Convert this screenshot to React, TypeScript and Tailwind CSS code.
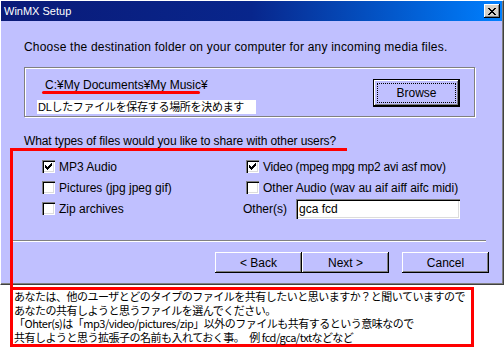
import React from "react";

const CHECK_COLS: [number, number][] = [
  [3, 5],
  [4, 6],
  [5, 7],
  [6, 6],
  [7, 5],
  [8, 4],
  [9, 3],
];

function CheckBox({ checked }: { checked?: boolean }) {
  return (
    <span className="relative inline-block w-[13px] h-[13px] shrink-0 bg-white shadow-[inset_1px_1px_0_#808080,inset_2px_2px_0_#000,inset_-1px_-1px_0_#fff,inset_-2px_-2px_0_#dcdcdc]">
      {checked && (
        <svg className="absolute inset-0" width="13" height="13" viewBox="0 0 13 13" shapeRendering="crispEdges">
          {CHECK_COLS.map(([x, y]) => (
            <rect key={x} x={x} y={y} width="1" height="3" fill="#000" />
          ))}
        </svg>
      )}
    </span>
  );
}

function Option({ checked, label, className = "" }: { checked?: boolean; label: string; className?: string }) {
  return (
    <div className="flex items-center h-[13px] gap-[4px] whitespace-nowrap">
      <CheckBox checked={checked} />
      <span className={className}>{label}</span>
    </div>
  );
}

function Btn({ children, className = "" }: { children: React.ReactNode; className?: string }) {
  return (
    <div
      className={
        "h-[21px] w-[87px] flex items-center justify-center bg-[#c0c0ff] shadow-[inset_-1px_-1px_0_#000,inset_1px_1px_0_#fff,inset_-2px_-2px_0_#808080] " +
        className
      }
    >
      {children}
    </div>
  );
}

export default function App() {
  return (
    <div className="relative w-[504px] h-[348px] overflow-hidden bg-white text-black text-[12px] leading-[14px] font-['Liberation_Sans','Noto_Sans_CJK_JP',sans-serif]">
      {/* Window */}
      <div className="h-[285px] border border-t-white border-l-white border-r-[#404040] border-b-[#404040]">
        <div className="h-full flex flex-col bg-[#c0c0ff] border-r border-b border-r-[#808080] border-b-[#808080]">
          {/* Title bar */}
          <div className="h-[20px] shrink-0 flex items-center justify-between pl-[3px] pr-[2px] bg-linear-to-r from-[#0a1a78] via-[#08268c] to-[#0080ff] text-white text-[11px]">
            <span>WinMX Setup</span>
            <div className="w-[16px] h-[14px] flex items-center justify-center bg-[#d4d0c8] shadow-[inset_-1px_-1px_0_#000,inset_1px_1px_0_#fff,inset_-2px_-2px_0_#808080]">
              <svg width="8" height="7" viewBox="0 0 8 7" shapeRendering="crispEdges">
                <path d="M0 0h2v1h-2zM6 0h2v1h-2zM1 1h2v1h-2zM5 1h2v1h-2zM2 2h4v1h-4zM3 3h2v1h-2zM2 4h4v1h-4zM1 5h2v1h-2zM5 5h2v1h-2zM0 6h2v1h-2zM6 6h2v1h-2z" fill="#000" />
              </svg>
            </div>
          </div>

          {/* Body */}
          <div className="ml-[23px] mt-[19px] h-[14px] whitespace-nowrap tracking-[0.2px]">
            Choose the destination folder on your computer for any incoming media files.
          </div>

          {/* Folder group */}
          <div className="ml-[23px] mt-[13px] w-[451px] h-[50px] shrink-0 flex justify-between border border-[#808080] shadow-[inset_1px_1px_0_#fff,1px_1px_0_#fff]">
            <div className="pl-[12px] pt-[10px] flex flex-col">
              <div className="pl-[8px] h-[14px] whitespace-nowrap">C:¥My Documents¥My Music¥</div>
              <div className="mt-[8px] w-[219px] h-[14px] bg-white pl-[1px] whitespace-nowrap text-[11px] tracking-[-0.3px]">
                DLしたファイルを保存する場所を決めます
              </div>
            </div>
            <div className="mt-[11px] mr-[14px] w-[87px] h-[28px] border border-black">
              <div className="w-full h-full p-[3px] bg-[#c0c0ff] shadow-[inset_-1px_-1px_0_#000,inset_1px_1px_0_#fff,inset_-2px_-2px_0_#808080]">
                <div className="w-full h-full flex items-center justify-center border border-dotted border-black">
                  Browse
                </div>
              </div>
            </div>
          </div>

          <div className="ml-[23px] mt-[17px] h-[14px] whitespace-nowrap tracking-[-0.1px]">
            What types of files would you like to share with other users?
          </div>

          {/* Options */}
          <div className="ml-[41px] mt-[12px] flex flex-col">
            <div className="h-[21px] flex items-start">
              <div className="w-[204px]">
                <Option checked label="MP3 Audio" />
              </div>
              <Option checked label="Video (mpeg mpg mp2 avi asf mov)" className="tracking-[-0.2px]" />
            </div>
            <div className="h-[21px] flex items-start">
              <div className="w-[204px]">
                <Option label="Pictures (jpg jpeg gif)" />
              </div>
              <Option label="Other Audio (wav au aif aiff aifc midi)" />
            </div>
            <div className="h-[21px] flex items-start">
              <div className="w-[201px]">
                <div className="ml-[0px]">
                  <Option label="Zip archives" />
                </div>
              </div>
              <div className="flex items-center h-[13px]">
                <span className="w-[53px] whitespace-nowrap">Other(s)</span>
                <div className="w-[164px] h-[20px] shrink-0 flex items-center pl-[3px] bg-white shadow-[inset_1px_1px_0_#808080,inset_2px_2px_0_#000,inset_-1px_-1px_0_#fff,inset_-2px_-2px_0_#dcdcdc]">
                  gca fcd
                </div>
              </div>
            </div>
          </div>

          {/* Separator */}
          <div className="ml-[9px] mt-[17px] w-[476px] h-[2px] border-t border-t-[#808080] border-b border-b-white" />

          {/* Buttons */}
          <div className="ml-[214px] mt-[10px] flex">
            <Btn>&lt; Back</Btn>
            <Btn>Next &gt;</Btn>
            <Btn className="ml-[13px]">Cancel</Btn>
          </div>
        </div>
      </div>

      {/* Note box */}
      <div className="ml-[10px] mt-[2px] w-[464px] h-[60px] border-[3px] border-[#ff0000] pl-[1px] text-[11px] leading-[13.7px] tracking-[-0.5px] whitespace-nowrap font-['Noto_Sans_CJK_JP',sans-serif]">
        <div className="h-[13.7px]">あなたは、他のユーザとどのタイプのファイルを共有したいと思いますか？と聞いていますので</div>
        <div className="h-[13.7px]">あなたの共有しようと思うファイルを選んでください。</div>
        <div className="h-[13.7px]">「Ohter(s)は「mp3/video/pictures/zip」以外のファイルも共有するという意味なので</div>
        <div className="h-[13.7px]">共有しようと思う拡張子の名前も入れておく事。　例 fcd/gca/txtなどなど</div>
      </div>

      {/* Red annotations */}
      <div className="absolute left-[42px] top-[91px] w-[158px] h-[3px] rounded-full bg-[#ff0000]" />
      <div className="absolute left-[10px] top-[148px] w-[337px] h-[3px] bg-[#ff0000]" />
      <div className="absolute left-[10px] top-[148px] w-[3px] h-[142px] bg-[#ff0000]" />
    </div>
  );
}
